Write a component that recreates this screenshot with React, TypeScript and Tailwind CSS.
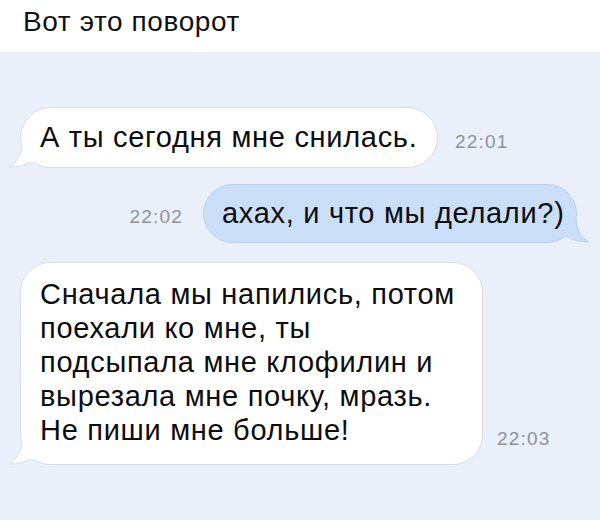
import React from "react";

const font = { fontFamily: '"Liberation Sans", Arial, sans-serif' };

function TailLeft() {
  return (
    <svg
      className="absolute left-[-12px] bottom-[-1px]"
      width="32"
      height="26"
      viewBox="0 0 32 26"
    >
      <path d="M13 0 C13 13 7 21 0 25 C9 25 16 23 22 20 L32 20 L32 0 Z" fill="#ffffff" />
      <path d="M13 2 C13 13 7 21 0 25 C9 25 16 23 22 20" fill="none" stroke="#d9dde3" strokeWidth="1" />
    </svg>
  );
}

function TailRight() {
  return (
    <svg
      className="absolute right-[-13px] bottom-[-1px]"
      width="32"
      height="26"
      viewBox="0 0 32 26"
    >
      <path d="M19 0 C19 13 25 21 32 25 C23 25 16 23 10 20 L0 20 L0 0 Z" fill="#cadef8" />
      <path d="M19 2 C19 13 25 21 32 25 C23 25 16 23 10 20" fill="none" stroke="#bdd0ea" strokeWidth="1" />
    </svg>
  );
}

function Time({ children, className = "" }: { children: React.ReactNode; className?: string }) {
  return (
    <span className={"text-[19px] leading-none tracking-[1.2px] text-[#8d929a] " + className} style={font}>
      {children}
    </span>
  );
}

export default function App() {
  return (
    <div className="w-[600px] h-[525px] bg-white overflow-hidden" style={font}>
      <div className="h-[52px] flex items-center px-[23px]">
        <h1 className="text-[28px] leading-none tracking-[0.6px] text-[#111] -mt-[8px]">Вот это поворот</h1>
      </div>

      <div className="h-[468px] bg-[#e9f0fa] flex flex-col pt-[55px]">
        <div className="flex items-center pl-[20px]">
          <div className="relative bg-white border border-[#d9dde3] rounded-[31px] h-[61px] w-[418px] pl-[19px] flex items-center">
            <TailLeft />
            <span className="relative text-[29px] tracking-[0.7px] text-[#0d0d0d]">А ты сегодня мне снилась.</span>
          </div>
          <Time className="ml-[17px] mt-[8px]">22:01</Time>
        </div>

        <div className="flex items-center justify-end pr-[23px] mt-[16px]">
          <Time className="mr-[20px] mt-[6px]">22:02</Time>
          <div className="relative bg-[#cadef8] border border-[#bdd0ea] rounded-[30px] h-[59px] w-[374px] pl-[18px] flex items-center">
            <TailRight />
            <span className="relative text-[29px] tracking-[0.7px] text-[#0d0d0d]">ахах, и что мы делали?)</span>
          </div>
        </div>

        <div className="flex items-end pl-[20px] mt-[19px]">
          <div className="relative bg-white border border-[#d9dde3] rounded-[30px] w-[463px] h-[203px] pl-[19px] pt-[14px]">
            <TailLeft />
            <div className="relative text-[29px] leading-[34px] tracking-[0.7px] text-[#0d0d0d]">
              <div>Сначала мы напились, потом</div>
              <div>поехали ко мне, ты</div>
              <div>подсыпала мне клофилин и</div>
              <div>вырезала мне почку, мразь.</div>
              <div>Не пиши мне больше!</div>
            </div>
          </div>
          <Time className="ml-[14px] mb-[17px]">22:03</Time>
        </div>
      </div>
    </div>
  );
}
